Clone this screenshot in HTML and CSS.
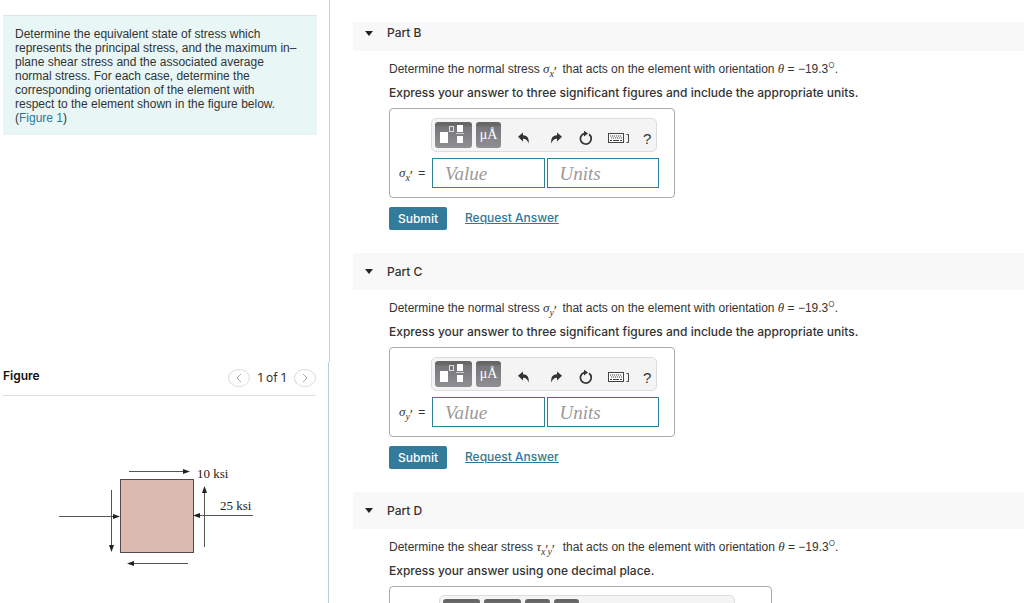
FILE: index.html
```html
<!DOCTYPE html>
<html lang="en">
<head>
  <meta charset="UTF-8" />
  <meta name="viewport" content="width=device-width, initial-scale=1.0" />
  <title>Equivalent State of Stress</title>
  <link rel="stylesheet" href="styles.css">
</head>
<body>
  <!-- shared icons -->
  <svg class="sprite" aria-hidden="true">
    <symbol id="i-template" viewBox="0 0 37 26">
      <rect x="5" y="10" width="8" height="11" fill="#fff"/>
      <rect x="14.500" y="4.500" width="4" height="5" fill="none" stroke="#ddd"/>
      <rect x="22" y="3" width="6" height="7" fill="#fff"/>
      <rect x="21" y="11" width="8" height="1" fill="#ccc"/>
      <rect x="22" y="14" width="6" height="7" fill="#fff"/>
    </symbol>
    <symbol id="i-undo" viewBox="0 0 12 12">
      <path d="M0 4.800 5 .5v2.700c4 .1 6.500 2.800 5.600 8.300C9.700 8.300 8 7 5 6.800v2.700z" fill="#333"/>
    </symbol>
    <symbol id="i-reset" viewBox="0 0 14 16">
      <path d="M10 4.300A5.400 5.400 0 1 1 5 3.600" fill="none" stroke="#333" stroke-width="1.700"/>
      <path d="M5 .8 9 3.600 5 6.400z" fill="#333"/>
    </symbol>
    <symbol id="i-keyboard" viewBox="0 0 22 12">
      <rect x=".5" y="1.500" width="15" height="9" fill="#fff" stroke="#444"/>
      <path d="M2 4h12M3 6h11" stroke="#444" stroke-width="1.200" stroke-dasharray="1.200 .8"/>
      <path d="M2 8.500h2M5 8.500h6M12 8.500h2" stroke="#444"/>
      <path d="M18.500 2.500h2v8h-2" fill="none" stroke="#444"/>
    </symbol>
  </svg>

  <aside class="sidebar">
    <div class="prompt-pane">
      <div class="prompt">
        Determine the equivalent state of stress which<br>
        represents the principal stress, and the maximum in–<br>
        plane shear stress and the associated average<br>
        normal stress. For each case, determine the<br>
        corresponding orientation of the element with<br>
        respect to the element shown in the figure below.<br>
        (<a href="#figure">Figure 1</a>)
      </div>
    </div>
    <div class="figure-pane" id="figure">
      <div class="figure-header">
        <h2>Figure</h2>
        <div class="pager">
          <button aria-label="Previous figure"><svg width="6" height="10" viewBox="0 0 6 10"><path d="M5 1 1 5l4 4"/></svg></button>
          <span>1 of 1</span>
          <button aria-label="Next figure"><svg width="6" height="10" viewBox="0 0 6 10"><path d="m1 1 4 4-4 4"/></svg></button>
        </div>
      </div>
      <svg class="diagram" width="200" height="110" viewBox="0 0 200 110" role="img" aria-label="Stress element">
        <rect x="61.500" y="19.500" width="73" height="73" fill="#dbbab0" stroke="#554a47"/>
        <g stroke="#555">
          <path d="M70 11.500h55M145.500 87V30M52.500 30v57M0 56.500h55M194 55.500h-55M129 103.500H75"/>
        </g>
        <g fill="#222">
          <path d="m131 11.500-7-2.500v5zM145.500 26l-2.500 7h5zM52.500 92 50 85h5zM61 56.500 54 54v5zM134 55.500l7-2.500v5zM68 103.500l7-2.500v5z"/>
        </g>
        <text x="138" y="18">10 ksi</text>
        <text x="161" y="50">25 ksi</text>
      </svg>
    </div>
  </aside>

  <main class="content">
    <section class="part">
      <h3 class="part-header"><span class="caret"></span>Part B</h3>
      <div class="part-body">
        <p>Determine the normal stress <span class="sym"><i>σ</i><sub>x<span class="prime">′</span></sub></span> that acts on the element with orientation <i class="theta">θ</i> = −19.3<sup>○</sup>.</p>
        <p class="instructions">Express your answer to three significant figures and include the appropriate units.</p>
        <div class="answer-box">
          <div class="toolbar">
            <button class="tool wide" aria-label="Templates"><svg width="37" height="26"><use href="#i-template"/></svg></button>
            <button class="tool">μÅ</button>
            <button class="icon undo" aria-label="Undo"><svg width="12" height="12"><use href="#i-undo"/></svg></button>
            <button class="icon redo" aria-label="Redo"><svg width="12" height="12"><use href="#i-undo"/></svg></button>
            <button class="icon reset" aria-label="Reset"><svg width="14" height="16"><use href="#i-reset"/></svg></button>
            <button class="icon keys" aria-label="Keyboard shortcuts"><svg width="22" height="12"><use href="#i-keyboard"/></svg></button>
            <button class="icon help">?</button>
          </div>
          <div class="fields">
            <label for="value-b"><span class="sym"><i>σ</i><sub>x<span class="prime">′</span></sub></span> =</label>
            <input type="text" id="value-b" placeholder="Value">
            <input type="text" placeholder="Units" aria-label="Units">
          </div>
        </div>
        <div class="actions">
          <button class="submit">Submit</button>
          <a href="#">Request Answer</a>
        </div>
      </div>
    </section>

    <section class="part">
      <h3 class="part-header"><span class="caret"></span>Part C</h3>
      <div class="part-body">
        <p>Determine the normal stress <span class="sym"><i>σ</i><sub>y<span class="prime">′</span></sub></span> that acts on the element with orientation <i class="theta">θ</i> = −19.3<sup>○</sup>.</p>
        <p class="instructions">Express your answer to three significant figures and include the appropriate units.</p>
        <div class="answer-box">
          <div class="toolbar">
            <button class="tool wide" aria-label="Templates"><svg width="37" height="26"><use href="#i-template"/></svg></button>
            <button class="tool">μÅ</button>
            <button class="icon undo" aria-label="Undo"><svg width="12" height="12"><use href="#i-undo"/></svg></button>
            <button class="icon redo" aria-label="Redo"><svg width="12" height="12"><use href="#i-undo"/></svg></button>
            <button class="icon reset" aria-label="Reset"><svg width="14" height="16"><use href="#i-reset"/></svg></button>
            <button class="icon keys" aria-label="Keyboard shortcuts"><svg width="22" height="12"><use href="#i-keyboard"/></svg></button>
            <button class="icon help">?</button>
          </div>
          <div class="fields">
            <label for="value-c"><span class="sym"><i>σ</i><sub>y<span class="prime">′</span></sub></span> =</label>
            <input type="text" id="value-c" placeholder="Value">
            <input type="text" placeholder="Units" aria-label="Units">
          </div>
        </div>
        <div class="actions">
          <button class="submit">Submit</button>
          <a href="#">Request Answer</a>
        </div>
      </div>
    </section>

    <section class="part">
      <h3 class="part-header"><span class="caret"></span>Part D</h3>
      <div class="part-body">
        <p>Determine the shear stress <span class="sym long"><i>τ</i><sub>x<span class="prime">′</span>y<span class="prime">′</span></sub></span> that acts on the element with orientation <i class="theta">θ</i> = −19.3<sup>○</sup>.</p>
        <p class="instructions">Express your answer using one decimal place.</p>
        <div class="answer-box large">
          <div class="toolbar">
            <button class="tool wide" aria-label="Templates"></button>
            <button class="tool wide" aria-label="Symbols"></button>
            <button class="tool" aria-label="Greek letters"></button>
            <button class="tool" aria-label="Vectors"></button>
          </div>
        </div>
      </div>
    </section>
  </main>
</body>
</html>
```
FILE: styles.css
```css
* {
  box-sizing: border-box;
}
body, html {
  margin: 0;
  padding: 0;
  height: 100%;
}
body {
  display: flex;
  overflow: hidden;
  background: #fff;
  color: #333;
  font-family: "Liberation Sans", Arial, sans-serif;
  font-size: 12px;
  line-height: 14px;
}
button {
  padding: 0;
  border: none;
  background: none;
  font-family: inherit;
  cursor: pointer;
}
a {
  color: #2f7899;
}
.sprite {
  display: none;
}

/* left column */
.sidebar {
  display: flex;
  flex-direction: column;
  flex: 0 0 330px;
}
.prompt-pane {
  flex: 1;
  padding: 15px 12px 0 3px;
  border-right: 1px solid #c8d0d8;
}
.prompt {
  padding: 11px 0 10px 12px;
  border-top: 1px solid #dae4e7;
  background: #e8f6f6;
  white-space: nowrap;
}
.prompt a {
  text-decoration: none;
}
.figure-pane {
  height: 40%;
  padding-left: 3px;
  padding-right: 12px;
  margin-right: 1px;
  border-right: 1px solid #bccde0;
}
.figure-header {
  display: flex;
  align-items: center;
  justify-content: space-between;
  height: 34px;
  border-bottom: 1px solid #ddd;
}
.figure-header h2 {
  margin: 0;
  padding-bottom: 4px;
  color: #111;
  font-family: Inter, sans-serif;
  font-size: 12px;
  font-weight: 600;
}
.pager {
  display: flex;
  align-items: center;
  gap: 8px;
  font-family: Inter, sans-serif;
}
.pager button {
  display: flex;
  align-items: center;
  justify-content: center;
  width: 22px;
  height: 18px;
  border: 1px solid #ddd;
  border-radius: 50%;
}
.pager path {
  fill: none;
  stroke: #aaa;
}
.diagram {
  display: block;
  margin: 64px 0 0 56px;
}
.diagram text {
  fill: #222;
  font-family: "Liberation Serif", serif;
  font-size: 13px;
}

/* right column */
.content {
  flex: 1;
  min-width: 0;
  padding: 22px 0 0 23px;
}
.part {
  padding-bottom: 23px;
}
.part-header {
  display: flex;
  align-items: center;
  gap: 14px;
  height: 37px;
  margin: 0 0 6px;
  padding-left: 12px;
  background: #f8f8f8;
  font-family: Inter, sans-serif;
  font-size: 12px;
  font-weight: 500;
}
/* the first header sits tighter against the top */
.part:first-child .part-header {
  height: 29px;
  padding-bottom: 7px;
}
.caret {
  border: 4px solid transparent;
  border-top: 5px solid #222;
  border-bottom: none;
}
.part-body {
  padding-left: 36px;
}
.part-body p {
  height: 24px;
  margin: 0;
  line-height: 24px;
  white-space: nowrap;
}
.part-body .instructions {
  font-family: Inter, sans-serif;
  font-weight: 500;
}
.sym {
  display: inline-block;
  width: 16px;
  font-family: "Liberation Serif", serif;
  font-size: 13px;
  font-style: italic;
  line-height: 14px;
  white-space: nowrap;
}
.sym.long {
  width: 23px;
}
.sym sub {
  font-size: 10px;
  line-height: 0;
}
.prime {
  margin-left: -1px;
  font-size: 14px;
}
.theta {
  font-family: "Liberation Serif", serif;
  font-size: 13px;
}
sup {
  font-family: Inter, sans-serif;
  font-size: 7px;
  line-height: 0;
}
.answer-box {
  width: 286px;
  height: 90px;
  margin-top: 3px;
  padding: 9px 15px 9px 8px;
  border: 1px solid #aaa;
  border-radius: 4px;
}
.answer-box.large {
  width: 383px;
  padding: 8px 36px 8px 49px;
}
.toolbar {
  display: flex;
  align-items: center;
  gap: 4px;
  height: 34px;
  margin-left: 33px;
  margin-right: 2px;
  padding: 0 3px;
  border: 1px solid #ddd;
  border-radius: 5px;
  background: #f4f4f4;
}
.large .toolbar {
  margin: 0;
}
.tool {
  width: 25px;
  height: 26px;
  border-radius: 3px;
  background: linear-gradient(#666 10%, #77777b 20%, #909094);
  color: #fff;
  font-family: "Liberation Serif", serif;
  font-size: 14px;
}
.tool.wide {
  width: 37px;
}
.icon {
  display: flex;
  flex-shrink: 0;
  align-items: center;
  justify-content: center;
  height: 20px;
  margin-top: 6px;
  color: #333;
}
.undo {
  margin-left: 13px;
}
.redo {
  margin-left: 16px;
}
.redo svg {
  transform: scaleX(-1);
}
.reset {
  margin-left: 13px;
}
.keys {
  margin-left: 11px;
}
.help {
  margin-left: 9px;
  font-size: 15px;
}
.fields {
  display: flex;
  align-items: center;
  gap: 2px;
  margin-top: 6px;
}
.fields label {
  width: 32px;
  padding-left: 1px;
  white-space: nowrap;
}
.fields input {
  flex: 1;
  min-width: 0;
  height: 30px;
  padding: 1px 12px 0;
  border: 1px solid #2f7f9c;
  background: #fff;
  color: #333;
  font: italic 19px "Liberation Serif", serif;
}
.fields input::placeholder {
  color: #999;
}
.actions {
  display: flex;
  align-items: center;
  gap: 18px;
  margin-top: 8px;
  height: 24px;
  font-family: Inter, sans-serif;
}
.submit {
  width: 58px;
  height: 23px;
  border-radius: 2px;
  background: #327b9b;
  color: #fff;
  font-size: 12px;
  font-weight: 500;
}
.actions a {
  font-weight: 500;
}
```
